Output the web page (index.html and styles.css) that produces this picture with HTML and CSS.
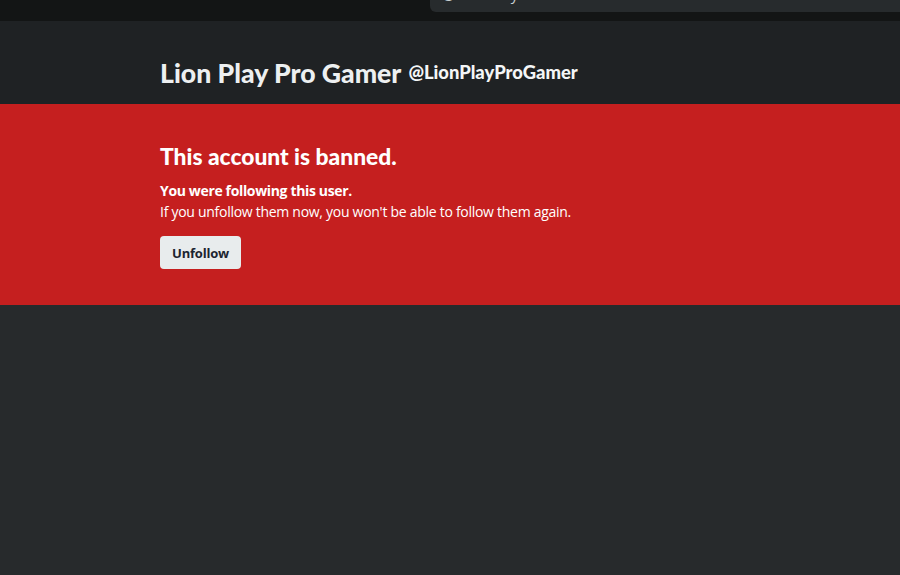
FILE: index.html
```html
<!DOCTYPE html>
<html lang="en">
<head>
<meta charset="utf-8">
<title>Lion Play Pro Gamer</title>
<link rel="stylesheet" href="styles.css">
</head>
<body>
<div class="topbar">
  <div class="search"><span class="search-text">@ Saarch y</span></div>
</div>
<header class="profile-head">
  <h1 class="name">Lion Play Pro Gamer</h1>
  <span class="handle">@LionPlayProGamer</span>
</header>
<section class="banned">
  <h2 class="banned-title">This account is banned.</h2>
  <p class="banned-strong">You were following this user.</p>
  <p class="banned-text">If you unfollow them now, you won't be able to follow them again.</p>
  <button class="btn">Unfollow</button>
</section>
<main class="rest"></main>
</body>
</html>
```

FILE: styles.css
```css
html, body {
  margin: 0;
  padding: 0;
  background: #272a2c;
  height: 100%;
}
body {
  font-family: Lato, "Open Sans", sans-serif;
  color: #eef1f2;
  overflow: hidden;
}
.topbar {
  height: 21px;
  background: #131515;
  display: flex;
  justify-content: flex-end;
}
.search {
  width: 470px;
  height: 12px;
  background: #272b2d;
  border-bottom-left-radius: 6px;
  overflow: hidden;
  box-sizing: border-box;
  padding-left: 12px;
}
.search-text {
  display: block;
  margin-top: -15px;
  font-size: 15px;
  line-height: 18px;
  color: #c8ced2;
  font-family: "Open Sans", sans-serif;
}
.profile-head {
  background: #1f2224;
  height: 83px;
  box-sizing: border-box;
  padding: 35px 0 0 160px;
  display: flex;
  align-items: flex-start;
  gap: 7px;
}
.name {
  margin: 0;
  font-family: Lato, sans-serif;
  font-size: 26.6px;
  font-weight: 900;
  line-height: 34px;
  color: #edf0f1;
  letter-spacing: 0;
}
.handle {
  margin-top: 4px;
  font-size: 18.4px;
  line-height: 24px;
  font-weight: 900;
  color: #f4f6f7;
  font-family: Lato, sans-serif;
  letter-spacing: 0;
}
.banned {
  background: #c51f1f;
  height: 201px;
  box-sizing: border-box;
  padding: 38px 0 0 160px;
  color: #fff;
}
.banned-title {
  margin: 0;
  font-family: Lato, sans-serif;
  font-size: 22.8px;
  line-height: 28px;
  font-weight: 900;
}
.banned-strong {
  margin: 10px 0 0;
  font-size: 14px;
  line-height: 21px;
  font-weight: 700;
  font-family: "Open Sans", sans-serif;
  letter-spacing: -0.35px;
}
.banned-text {
  margin: 0;
  font-size: 14px;
  line-height: 21px;
  font-family: "Open Sans", sans-serif;
  letter-spacing: -0.28px;
}
.btn {
  margin-top: 14px;
  width: 81px;
  height: 33px;
  border: none;
  border-radius: 4px;
  background: #e8eced;
  color: #1c2530;
  font-family: "Open Sans", sans-serif;
  font-weight: 700;
  font-size: 13px;
  letter-spacing: -0.2px;
  cursor: pointer;
}
.rest {
  background: #272a2c;
}
```
